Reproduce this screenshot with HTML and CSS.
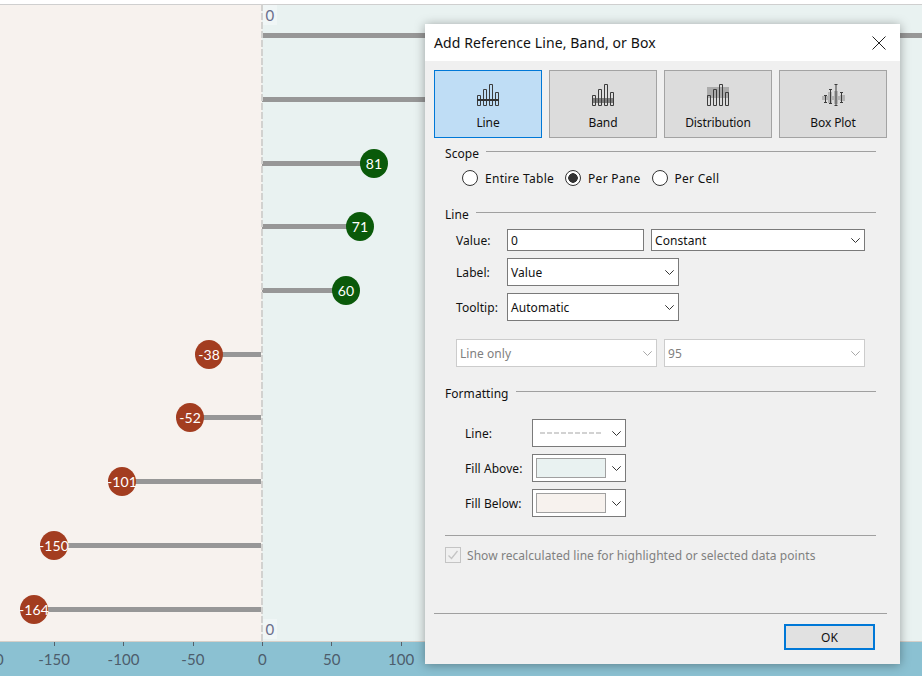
FILE: index.html
```html
<!DOCTYPE html>
<html lang="en">
<head>
    <meta charset="UTF-8" />
    <title>Add Reference Line, Band, or Box</title>
    <link rel="stylesheet" href="styles.css">
</head>
<body>
    <div class="plot">
        <div class="row"><span></span><div class="bar" style="width: 700px"></div></div>
        <div class="row"><span></span><div class="bar" style="width: 300px"></div></div>
        <div class="row"><span></span><div class="bar" style="width: 112px"><b class="dot pos">81</b></div></div>
        <div class="row"><span></span><div class="bar" style="width: 98px"><b class="dot pos">71</b></div></div>
        <div class="row"><span></span><div class="bar" style="width: 84px"><b class="dot pos">60</b></div></div>
        <div class="row"><div class="bar left" style="width: 53px"><b class="dot neg">-38</b></div></div>
        <div class="row"><div class="bar left" style="width: 72px"><b class="dot neg">-52</b></div></div>
        <div class="row"><div class="bar left" style="width: 140px"><b class="dot neg">-101</b></div></div>
        <div class="row"><div class="bar left" style="width: 208px"><b class="dot neg">-150</b></div></div>
        <div class="row"><div class="bar left" style="width: 228px"><b class="dot neg">-164</b></div></div>
        <div class="zero-line"></div>
        <span class="zero-label top">0</span>
        <span class="zero-label bottom">0</span>
    </div>
    <div class="axis">
        <div class="tick">-200</div>
        <div class="tick">-150</div>
        <div class="tick">-100</div>
        <div class="tick">-50</div>
        <div class="tick">0</div>
        <div class="tick">50</div>
        <div class="tick">100</div>
    </div>

    <div class="dialog">
        <div class="titlebar">
            <span>Add Reference Line, Band, or Box</span>
            <svg class="close" width="14" height="14" viewBox="0 0 14 14"><path d="M.5.5l13 13M13.5.5l-13 13" /></svg>
        </div>
        <div class="dialog-body">
            <div class="types">
                <div class="type active">
                    <svg width="23" height="22" viewBox="0 0 23 22">
                        <path class="ic" d="M.5 11.5h3v10h-3zM6.5 5.5h3v16h-3zM12.5.5h3v21h-3zM18.5 8.5h3v13h-3z" />
                        <rect y="15" width="22" height="2" fill="#333" />
                    </svg>
                    Line
                </div>
                <div class="type">
                    <svg width="23" height="22" viewBox="0 0 23 22">
                        <rect y="14" width="22" height="5" fill="#808080" />
                        <path class="ic" d="M.5 11.5h3v10h-3zM6.5 5.5h3v16h-3zM12.5.5h3v21h-3zM18.5 8.5h3v13h-3z" />
                    </svg>
                    Band
                </div>
                <div class="type">
                    <svg width="23" height="22" viewBox="0 0 23 22">
                        <rect y="3" width="22" height="11" fill="#ababab" />
                        <path class="ic" d="M.5 11.5h3v10h-3zM6.5 5.5h3v16h-3zM12.5.5h3v21h-3zM18.5 8.5h3v13h-3z" />
                    </svg>
                    Distribution
                </div>
                <div class="type">
                    <svg width="23" height="22" viewBox="0 0 23 22">
                        <rect y="12" width="23" height="4" fill="#b4b4b4" />
                        <rect x="6" y="8" width="4" height="11" fill="#b4b4b4" />
                        <rect x="12" y="7" width="4" height="13" fill="#b4b4b4" />
                        <rect x="18" y="11" width="5" height="6" fill="#b4b4b4" />
                        <path class="ic" d="M2 11.500h3M3.500 11v7M2 18.500h3M7 5.500h3M8.500 5v14M7 19.500h3M12.500.5h3M14 0v22M12.500 21.500h3M18 8.500h3M19.500 8v10M18 18.500h3" />
                    </svg>
                    Box Plot
                </div>
            </div>

            <div class="section">
                <div class="group-title"><span>Scope</span><i></i></div>
                <div class="radios">
                    <label class="radio-item"><span class="radio"></span>Entire Table</label>
                    <label class="radio-item"><span class="radio on"></span>Per Pane</label>
                    <label class="radio-item"><span class="radio"></span>Per Cell</label>
                </div>

                <div class="group-title line-title"><span>Line</span><i></i></div>
                <div class="field first">
                    <span class="field-label">Value:</span>
                    <div class="box input">0</div>
                    <div class="box select wide">Constant<svg class="chev" width="9" height="5" viewBox="0 0 9 5"><path d="M.3.3l4.200 4.200L8.700.3" /></svg></div>
                </div>
                <div class="field">
                    <span class="field-label">Label:</span>
                    <div class="box select tall med">Value<svg class="chev" width="9" height="5" viewBox="0 0 9 5"><path d="M.3.3l4.200 4.200L8.700.3" /></svg></div>
                </div>
                <div class="field">
                    <span class="field-label">Tooltip:</span>
                    <div class="box select tall med">Automatic<svg class="chev" width="9" height="5" viewBox="0 0 9 5"><path d="M.3.3l4.200 4.200L8.700.3" /></svg></div>
                </div>
                <div class="field disabled-row">
                    <div class="box select tall off half">Line only<svg class="chev" width="9" height="5" viewBox="0 0 9 5"><path d="M.3.3l4.200 4.200L8.700.3" /></svg></div>
                    <div class="box select tall off half">95<svg class="chev" width="9" height="5" viewBox="0 0 9 5"><path d="M.3.3l4.200 4.200L8.700.3" /></svg></div>
                </div>

                <div class="group-title format-title"><span>Formatting</span><i></i></div>
                <div class="format first">
                    <span class="format-label">Line:</span>
                    <div class="box select tall color"><span class="dashes"></span><svg class="chev" width="9" height="5" viewBox="0 0 9 5"><path d="M.3.3l4.200 4.200L8.700.3" /></svg></div>
                </div>
                <div class="format">
                    <span class="format-label">Fill Above:</span>
                    <div class="box select tall color"><span class="swatch above"></span><svg class="chev" width="9" height="5" viewBox="0 0 9 5"><path d="M.3.3l4.200 4.200L8.700.3" /></svg></div>
                </div>
                <div class="format">
                    <span class="format-label">Fill Below:</span>
                    <div class="box select tall color"><span class="swatch below"></span><svg class="chev" width="9" height="5" viewBox="0 0 9 5"><path d="M.3.3l4.200 4.200L8.700.3" /></svg></div>
                </div>

                <div class="separator"></div>
                <div class="check-row">
                    <span class="check"><svg width="14" height="14" viewBox="0 0 14 14"><path d="M2.500 7.500l3 3 6-7.500" /></svg></span>
                    Show recalculated line for highlighted or selected data points
                </div>
            </div>

            <div class="footer">
                <div class="ok">OK</div>
            </div>
        </div>
    </div>
</body>
</html>
```

FILE: styles.css
```css
html, body {
    margin: 0;
    padding: 0;
    height: 676px;
    overflow: hidden;
}
body {
    background-color: white;
    padding-top: 4px;
    box-sizing: border-box;
    position: relative;
    font-family: "Noto Sans", sans-serif;
    font-size: 12px;
    letter-spacing: 0.06px;
    color: #111;
}

/* chart */
.plot {
    position: relative;
    height: 637px;
    background: linear-gradient(to right, #f7f2ee 262px, #e9f2f1 262px);
    box-shadow: inset 0 1px 0 #cfcfcf;
    overflow: hidden;
}
.row {
    display: grid;
    grid-template-columns: 261px 1fr;
    height: 63.7px;
    align-items: center;
}
.bar {
    position: relative;
    height: 5px;
    background-color: #979797;
    margin-left: 1px;
}
.bar.left {
    justify-self: end;
    margin-left: 0;
}
.dot {
    position: absolute;
    top: -12px;
    right: -14px;
    width: 28px;
    height: 29px;
    border-radius: 50%;
    display: flex;
    align-items: center;
    justify-content: center;
    color: white;
    font-family: Lato, sans-serif;
    font-size: 14px;
    font-weight: normal;
    white-space: nowrap;
}
.dot.pos {
    background-color: #0a5a0a;
}
.dot.neg {
    right: auto;
    left: -13px;
    background-color: #a33d20;
}
.zero-line {
    position: absolute;
    top: 0;
    bottom: 0;
    left: 261px;
    width: 2px;
    background: repeating-linear-gradient(to bottom, #d2d2d0 0, #d2d2d0 7px, transparent 7px, transparent 9px);
}
.zero-label {
    position: absolute;
    left: 263px;
    width: 14px;
    height: 20px;
    line-height: 20px;
    text-align: center;
    font-family: Lato, sans-serif;
    font-size: 15px;
    color: #6b6f8c;
    background-color: rgba(255, 255, 255, 0.35);
}
.zero-label.top {
    top: 1px;
}
.zero-label.bottom {
    bottom: 2px;
}
.axis {
    height: 35px;
    background-color: #8bc1d2;
    border-top: 1px solid #d6cfc8;
    box-sizing: border-box;
    display: flex;
    margin-left: -50px;
    width: 972px;
}
.tick {
    position: relative;
    width: 69.4px;
    text-align: center;
    padding-top: 8px;
    font-family: Lato, sans-serif;
    font-size: 15px;
    line-height: 18px;
    color: #4d5d6c;
}
.tick:first-child {
    text-indent: 6px;
}
.tick::before {
    content: "";
    position: absolute;
    top: 0;
    left: 34.5px;
    width: 1px;
    height: 4px;
    background-color: #55606a;
}

/* dialog */
.dialog {
    position: absolute;
    left: 425px;
    top: 24px;
    width: 475px;
    height: 640px;
    background-color: #f0f0f0;
    box-shadow: 0 1px 10px rgba(0, 0, 0, 0.35);
}
.titlebar {
    height: 37px;
    box-sizing: border-box;
    background-color: white;
    display: flex;
    align-items: center;
    justify-content: space-between;
    padding: 0 14px 1px 9px;
    font-size: 14px;
    letter-spacing: 0.1px;
}
.close {
    fill: none;
    stroke: #222;
    stroke-width: 1;
    margin-top: 1px;
}
.dialog-body {
    padding: 9px 13px 0 9px;
}
.types {
    display: flex;
    gap: 7px;
    letter-spacing: -0.1px;
}
.type {
    width: 108px;
    height: 68px;
    box-sizing: border-box;
    border: 1px solid #a3a3a3;
    background-color: #dcdcdc;
    display: flex;
    flex-direction: column;
    align-items: center;
    padding-top: 13px;
    gap: 8px;
    line-height: 18px;
}
.type.active {
    border-color: #0078d7;
    background-color: #bfddf5;
}
.ic {
    fill: none;
    stroke: #3c3c3c;
    stroke-width: 1;
}

.section {
    padding: 8px 11px 0;
}
.group-title {
    display: flex;
    height: 16px;
    line-height: 16px;
    gap: 7px;
}
.group-title i {
    flex: 1;
    height: 1px;
    margin-top: 5px;
    background-color: #a0a0a0;
}
.line-title {
    margin-top: 21px;
}
.format-title {
    margin-top: 19px;
}
.radios {
    display: flex;
    gap: 11px;
    margin-top: 8px;
    padding-left: 17px;
    letter-spacing: 0.27px;
}
.radio-item {
    display: flex;
    align-items: center;
    gap: 7px;
    height: 16px;
}
.radio {
    width: 16px;
    height: 16px;
    box-sizing: border-box;
    border: 1px solid #333;
    border-radius: 50%;
    background-color: white;
}
.radio.on {
    background: radial-gradient(circle, #333 0, #333 4.5px, white 5px);
}

.field {
    display: flex;
    align-items: center;
    gap: 7px;
    padding-left: 11px;
    margin-top: 7px;
}
.field.first {
    margin-top: 6px;
}
.field.disabled-row {
    margin-top: 18px;
}
.field-label {
    width: 44px;
}
.box {
    box-sizing: border-box;
    height: 22px;
    border: 1px solid #7a7a7a;
    background-color: white;
    display: flex;
    align-items: center;
    padding: 0 3px;
}
.input {
    width: 137px;
}
.select {
    justify-content: space-between;
    padding-right: 4px;
}
.select.wide {
    width: 214px;
}
.select.tall {
    height: 28px;
}
.select.med {
    width: 172px;
}
.chev {
    fill: none;
    stroke: #333;
    stroke-width: 1;
}
.off {
    border-color: #cccccc;
    color: #808080;
}
.off .chev {
    stroke: #a8a8a8;
}
.half {
    width: 201px;
}
.format {
    display: flex;
    align-items: center;
    padding-left: 20px;
    margin-top: 7px;
}
.format.first {
    margin-top: 17px;
}
.format-label {
    width: 67px;
}
.select.color {
    width: 94px;
}
.dashes {
    width: 62px;
    height: 2px;
    margin-left: 4px;
    background: repeating-linear-gradient(to right, #d2d2d2 0, #d2d2d2 5px, transparent 5px, transparent 7px);
}
.swatch {
    width: 70px;
    height: 20px;
    box-sizing: border-box;
    border: 1px solid #a0a0a0;
}
.swatch.above {
    background-color: #e9f2f1;
}
.swatch.below {
    background-color: #f7f2ee;
}
.separator {
    height: 1px;
    background-color: #a0a0a0;
    margin-top: 18px;
}
.check-row {
    display: flex;
    align-items: center;
    gap: 6px;
    margin-top: 11px;
    height: 16px;
    color: #808080;
}
.check {
    width: 16px;
    height: 16px;
    box-sizing: border-box;
    border: 1px solid #c4c4c4;
    background-color: #f0f0f0;
    display: flex;
    align-items: center;
    justify-content: center;
}
.check svg {
    fill: none;
    stroke: #c4c4c4;
    stroke-width: 1.3;
}
.footer {
    margin-top: 50px;
    border-top: 1px solid #a0a0a0;
    padding: 10px 12px 0 0;
    display: flex;
    justify-content: flex-end;
}
.ok {
    width: 91px;
    height: 26px;
    box-sizing: border-box;
    border: 2px solid #0078d7;
    background-color: #e1e1e1;
    display: flex;
    align-items: center;
    justify-content: center;
}
```
